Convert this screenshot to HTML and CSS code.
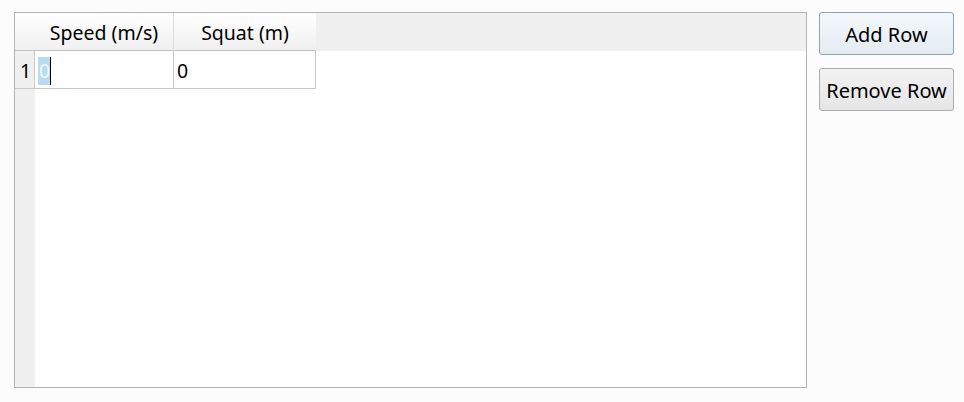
FILE: index.html
```html
<!DOCTYPE html>
<html>
<head>
<meta charset="utf-8">
<link rel="stylesheet" href="styles.css">
</head>
<body>
<div class="app">
  <div class="grid">
    <div class="head">
      <div class="corner"></div>
      <div class="hcell c1">Speed (m/s)</div>
      <div class="hcell c2">Squat (m)</div>
      <div class="hfill"></div>
    </div>
    <div class="row">
      <div class="rh">1</div>
      <div class="cell c1"><span class="sel">0</span><span class="caret"></span></div>
      <div class="cell c2">0</div>
    </div>
    <div class="rest">
      <div class="rest-rh"></div>
    </div>
  </div>
  <div class="buttons">
    <button class="btn default">Add Row</button>
    <button class="btn">Remove Row</button>
  </div>
</div>
</body>
</html>
```
FILE: styles.css
```css
html, body {
  margin: 0;
  padding: 0;
  background: #fcfcfc;
}
body {
  font-family: "Noto Sans", "Open Sans", sans-serif;
  font-size: 19.5px;
  color: #000;
}
.app {
  display: flex;
  align-items: flex-start;
  gap: 12px;
  padding: 12px 0 0 14px;
}
.grid {
  width: 791px;
  height: 374px;
  border: 1px solid #b4b4b4;
  background: #fff;
  display: flex;
  flex-direction: column;
}
.head {
  display: flex;
  height: 38px;
  flex: none;
  background: #f0f0f0;
}
.corner, .hcell {
  background: linear-gradient(#ffffff, #f0f0f0);
  border-bottom: 1px solid #c3c3c3;
  box-sizing: border-box;
  height: 38px;
}
.corner { width: 20px; }
.hcell {
  display: flex;
  align-items: center;
  justify-content: center;
  line-height: 1;
  padding-top: 3px;
}
.hcell.c1 { width: 139px; border-right: 1px solid #dcdcdc; }
.hcell.c2 { width: 142px; }
.hfill { flex: 1; }
.row {
  display: flex;
  height: 38px;
  flex: none;
}
.rh, .cell {
  height: 38px;
  box-sizing: border-box;
  border-bottom: 1px solid #c8c8c8;
  display: flex;
  align-items: center;
  padding-top: 2px;
}
.rh {
  width: 20px;
  background: #f0f0f0;
  border-right: 1px solid #c8c8c8;
  padding-left: 5px;
}
.cell {
  border-right: 1px solid #c8c8c8;
  padding-left: 3px;
}
.cell.c1 { width: 139px; }
.cell.c2 { width: 142px; }
.sel {
  background: #b7dbf1;
  color: #eef8ff;
  display: inline-block;
  height: 28px;
  line-height: 28px;
  padding: 0 0 0 1px;
}
.caret {
  display: inline-block;
  width: 1px;
  height: 28px;
  background: #000;
}
.rest {
  flex: 1;
  display: flex;
}
.rest-rh {
  width: 20px;
  background: #f0f0f0;
}
.buttons {
  display: flex;
  flex-direction: column;
  gap: 13px;
}
.btn {
  width: 135px;
  height: 43px;
  font-family: "Noto Sans", "Open Sans", sans-serif;
  font-size: 20px;
  color: #000;
  border: 1px solid #adadad;
  border-radius: 3px;
  background: linear-gradient(#f2f2f2, #e6e6e6);
  padding: 2px 0 0;
}
.btn.default {
  border-color: #8aa4b8;
  background: linear-gradient(#f4f8fb, #e4ecf2);
}
```
